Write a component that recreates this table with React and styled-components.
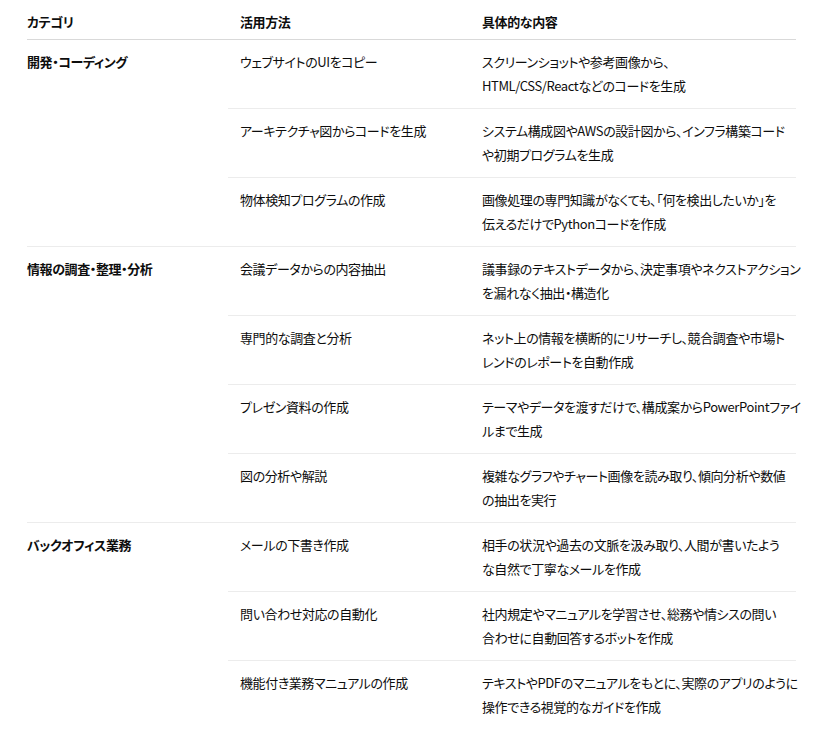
import React from 'react'
import styled, { createGlobalStyle } from 'styled-components'

const GlobalStyle = createGlobalStyle`
body{
    margin: 0;
    background: #ffffff;
    color: #0d0d0d;
    font-family: "Noto Sans CJK JP", "Noto Sans", sans-serif;
    font-feature-settings: "palt";
}
`

const groups = [
    {
        category: '開発・コーディング',
        items: [
            ['ウェブサイトのUIをコピー', ['スクリーンショットや参考画像から、', 'HTML/CSS/Reactなどのコードを生成']],
            ['アーキテクチャ図からコードを生成', ['システム構成図やAWSの設計図から、インフラ構築コード', 'や初期プログラムを生成']],
            ['物体検知プログラムの作成', ['画像処理の専門知識がなくても、「何を検出したいか」を', '伝えるだけでPythonコードを作成']],
        ],
    },
    {
        category: '情報の調査・整理・分析',
        items: [
            ['会議データからの内容抽出', ['議事録のテキストデータから、決定事項やネクストアクション', 'を漏れなく抽出・構造化']],
            ['専門的な調査と分析', ['ネット上の情報を横断的にリサーチし、競合調査や市場ト', 'レンドのレポートを自動作成']],
            ['プレゼン資料の作成', ['テーマやデータを渡すだけで、構成案からPowerPointファイ', 'ルまで生成']],
            ['図の分析や解説', ['複雑なグラフやチャート画像を読み取り、傾向分析や数値', 'の抽出を実行']],
        ],
    },
    {
        category: 'バックオフィス業務',
        items: [
            ['メールの下書き作成', ['相手の状況や過去の文脈を汲み取り、人間が書いたよう', 'な自然で丁寧なメールを作成']],
            ['問い合わせ対応の自動化', ['社内規定やマニュアルを学習させ、総務や情シスの問い', '合わせに自動回答するボットを作成']],
            ['機能付き業務マニュアルの作成', ['テキストやPDFのマニュアルをもとに、実際のアプリのように', '操作できる視覚的なガイドを作成']],
        ],
    },
]

const App = () => {
    return (
        <>
            <GlobalStyle />
            <Table>
                <colgroup>
                    <col style={{ width: 201 }} />
                    <col style={{ width: 242 }} />
                    <col style={{ width: 326 }} />
                </colgroup>
                <thead>
                    <tr>
                        <HeadCell>カテゴリ</HeadCell>
                        <HeadCell>活用方法</HeadCell>
                        <HeadCell>具体的な内容</HeadCell>
                    </tr>
                </thead>
                <tbody>
                    {groups.map((g, gi) =>
                        g.items.map(([use, lines], i) => (
                            <Row key={g.category + i}>
                                {i === 0 && (
                                    <CategoryCell
                                        rowSpan={g.items.length}
                                        $last={gi === groups.length - 1}
                                    >
                                        {g.category}
                                    </CategoryCell>
                                )}
                                <Cell>{use}</Cell>
                                <Cell>
                                    {lines.map((l) => (
                                        <Line key={l}>{l}</Line>
                                    ))}
                                </Cell>
                            </Row>
                        ))
                    )}
                </tbody>
            </Table>
        </>
    )
}

export default App

const Table = styled.table`
margin-left: 27px;
width: 769px;
table-layout: fixed;
border-collapse: collapse;
font-size: 13px;
letter-spacing: -0.4px;
line-height: 24px;
`

const HeadCell = styled.th`
text-align: left;
font-weight: 700;
padding: 10px 12px 5px;
border-bottom: 1px solid #d9d9d9;
&:first-child{
    padding-left: 0;
}
&:last-child{
    padding-right: 0;
}
`

const Row = styled.tr`
&:last-child td{
    border-bottom: none;
}
`

const Cell = styled.td`
vertical-align: top;
padding: 10px 12px;
border-bottom: 1px solid #ececec;
white-space: nowrap;
&:last-child{
    padding-right: 0;
}
`

const CategoryCell = styled(Cell)`
font-weight: 700;
padding-left: 0;
border-bottom: ${(p) => (p.$last ? 'none' : '1px solid #ececec')};
`

const Line = styled.div`
white-space: nowrap;
`
